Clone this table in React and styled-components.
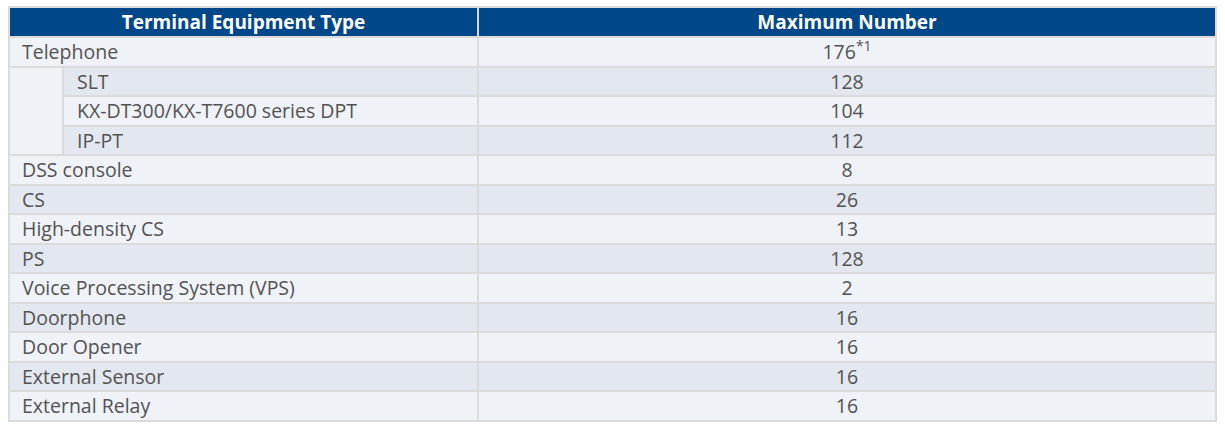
import styled, { createGlobalStyle } from "styled-components";

const GlobalStyle = createGlobalStyle`
    body {
        margin: 0;
        padding: 6px 8px;
        background: #ffffff;
        font-family: "Open Sans", "Liberation Sans", sans-serif;
    }
`;

const Table = styled.table`
    width: 100%;
    border-collapse: separate;
    border-spacing: 2px;
    background: #dbdbdb;
    table-layout: fixed;
`;

const HeadCell = styled.th`
    height: 28px;
    padding: 0;
    background: #00478a;
    color: #ffffff;
    font-size: 19px;
    font-weight: 700;
    text-align: center;
    line-height: 27px;
`;

const Cell = styled.td`
    height: 27.5px;
    padding: 0 0 0 ${(p) => (p.$sub ? 13 : 12)}px;
    background: ${(p) => (p.$dark ? "#e3e7ef" : "#eff2f7")};
    color: #535353;
    font-size: 19.5px;
    line-height: 25px;
    white-space: nowrap;
`;

const ValueCell = styled(Cell)`
    padding: 0;
    text-align: center;
`;

const Indent = styled.td`
    padding: 0;
    background: #eff2f7;
`;

const Note = styled.sup`
    font-size: 14px;
    line-height: 0;
    vertical-align: 8px;
`;

const subRows = [
    ["SLT", "128"],
    ["KX-DT300/KX-T7600 series DPT", "104"],
    ["IP-PT", "112"],
];

const rows = [
    ["DSS console", "8"],
    ["CS", "26"],
    ["High-density CS", "13"],
    ["PS", "128"],
    ["Voice Processing System (VPS)", "2"],
    ["Doorphone", "16"],
    ["Door Opener", "16"],
    ["External Sensor", "16"],
    ["External Relay", "16"],
];

export default function App() {
    return (
        <>
            <GlobalStyle />
            <Table>
                <colgroup>
                    <col style={{ width: "52px" }} />
                    <col style={{ width: "413px" }} />
                    <col />
                </colgroup>
                <thead>
                    <tr>
                        <HeadCell colSpan={2}>Terminal Equipment Type</HeadCell>
                        <HeadCell>Maximum Number</HeadCell>
                    </tr>
                </thead>
                <tbody>
                    <tr>
                        <Cell colSpan={2}>Telephone</Cell>
                        <ValueCell>
                            176<Note>*1</Note>
                        </ValueCell>
                    </tr>
                    {subRows.map(([label, value], i) => {
                        const dark = i % 2 === 0;
                        return (
                            <tr key={label}>
                                {i === 0 && <Indent rowSpan={3} />}
                                <Cell $sub $dark={dark}>
                                    {label}
                                </Cell>
                                <ValueCell $dark={dark}>{value}</ValueCell>
                            </tr>
                        );
                    })}
                    {rows.map(([label, value], i) => {
                        const dark = i % 2 === 1;
                        return (
                            <tr key={label}>
                                <Cell colSpan={2} $dark={dark}>
                                    {label}
                                </Cell>
                                <ValueCell $dark={dark}>{value}</ValueCell>
                            </tr>
                        );
                    })}
                </tbody>
            </Table>
        </>
    );
}
